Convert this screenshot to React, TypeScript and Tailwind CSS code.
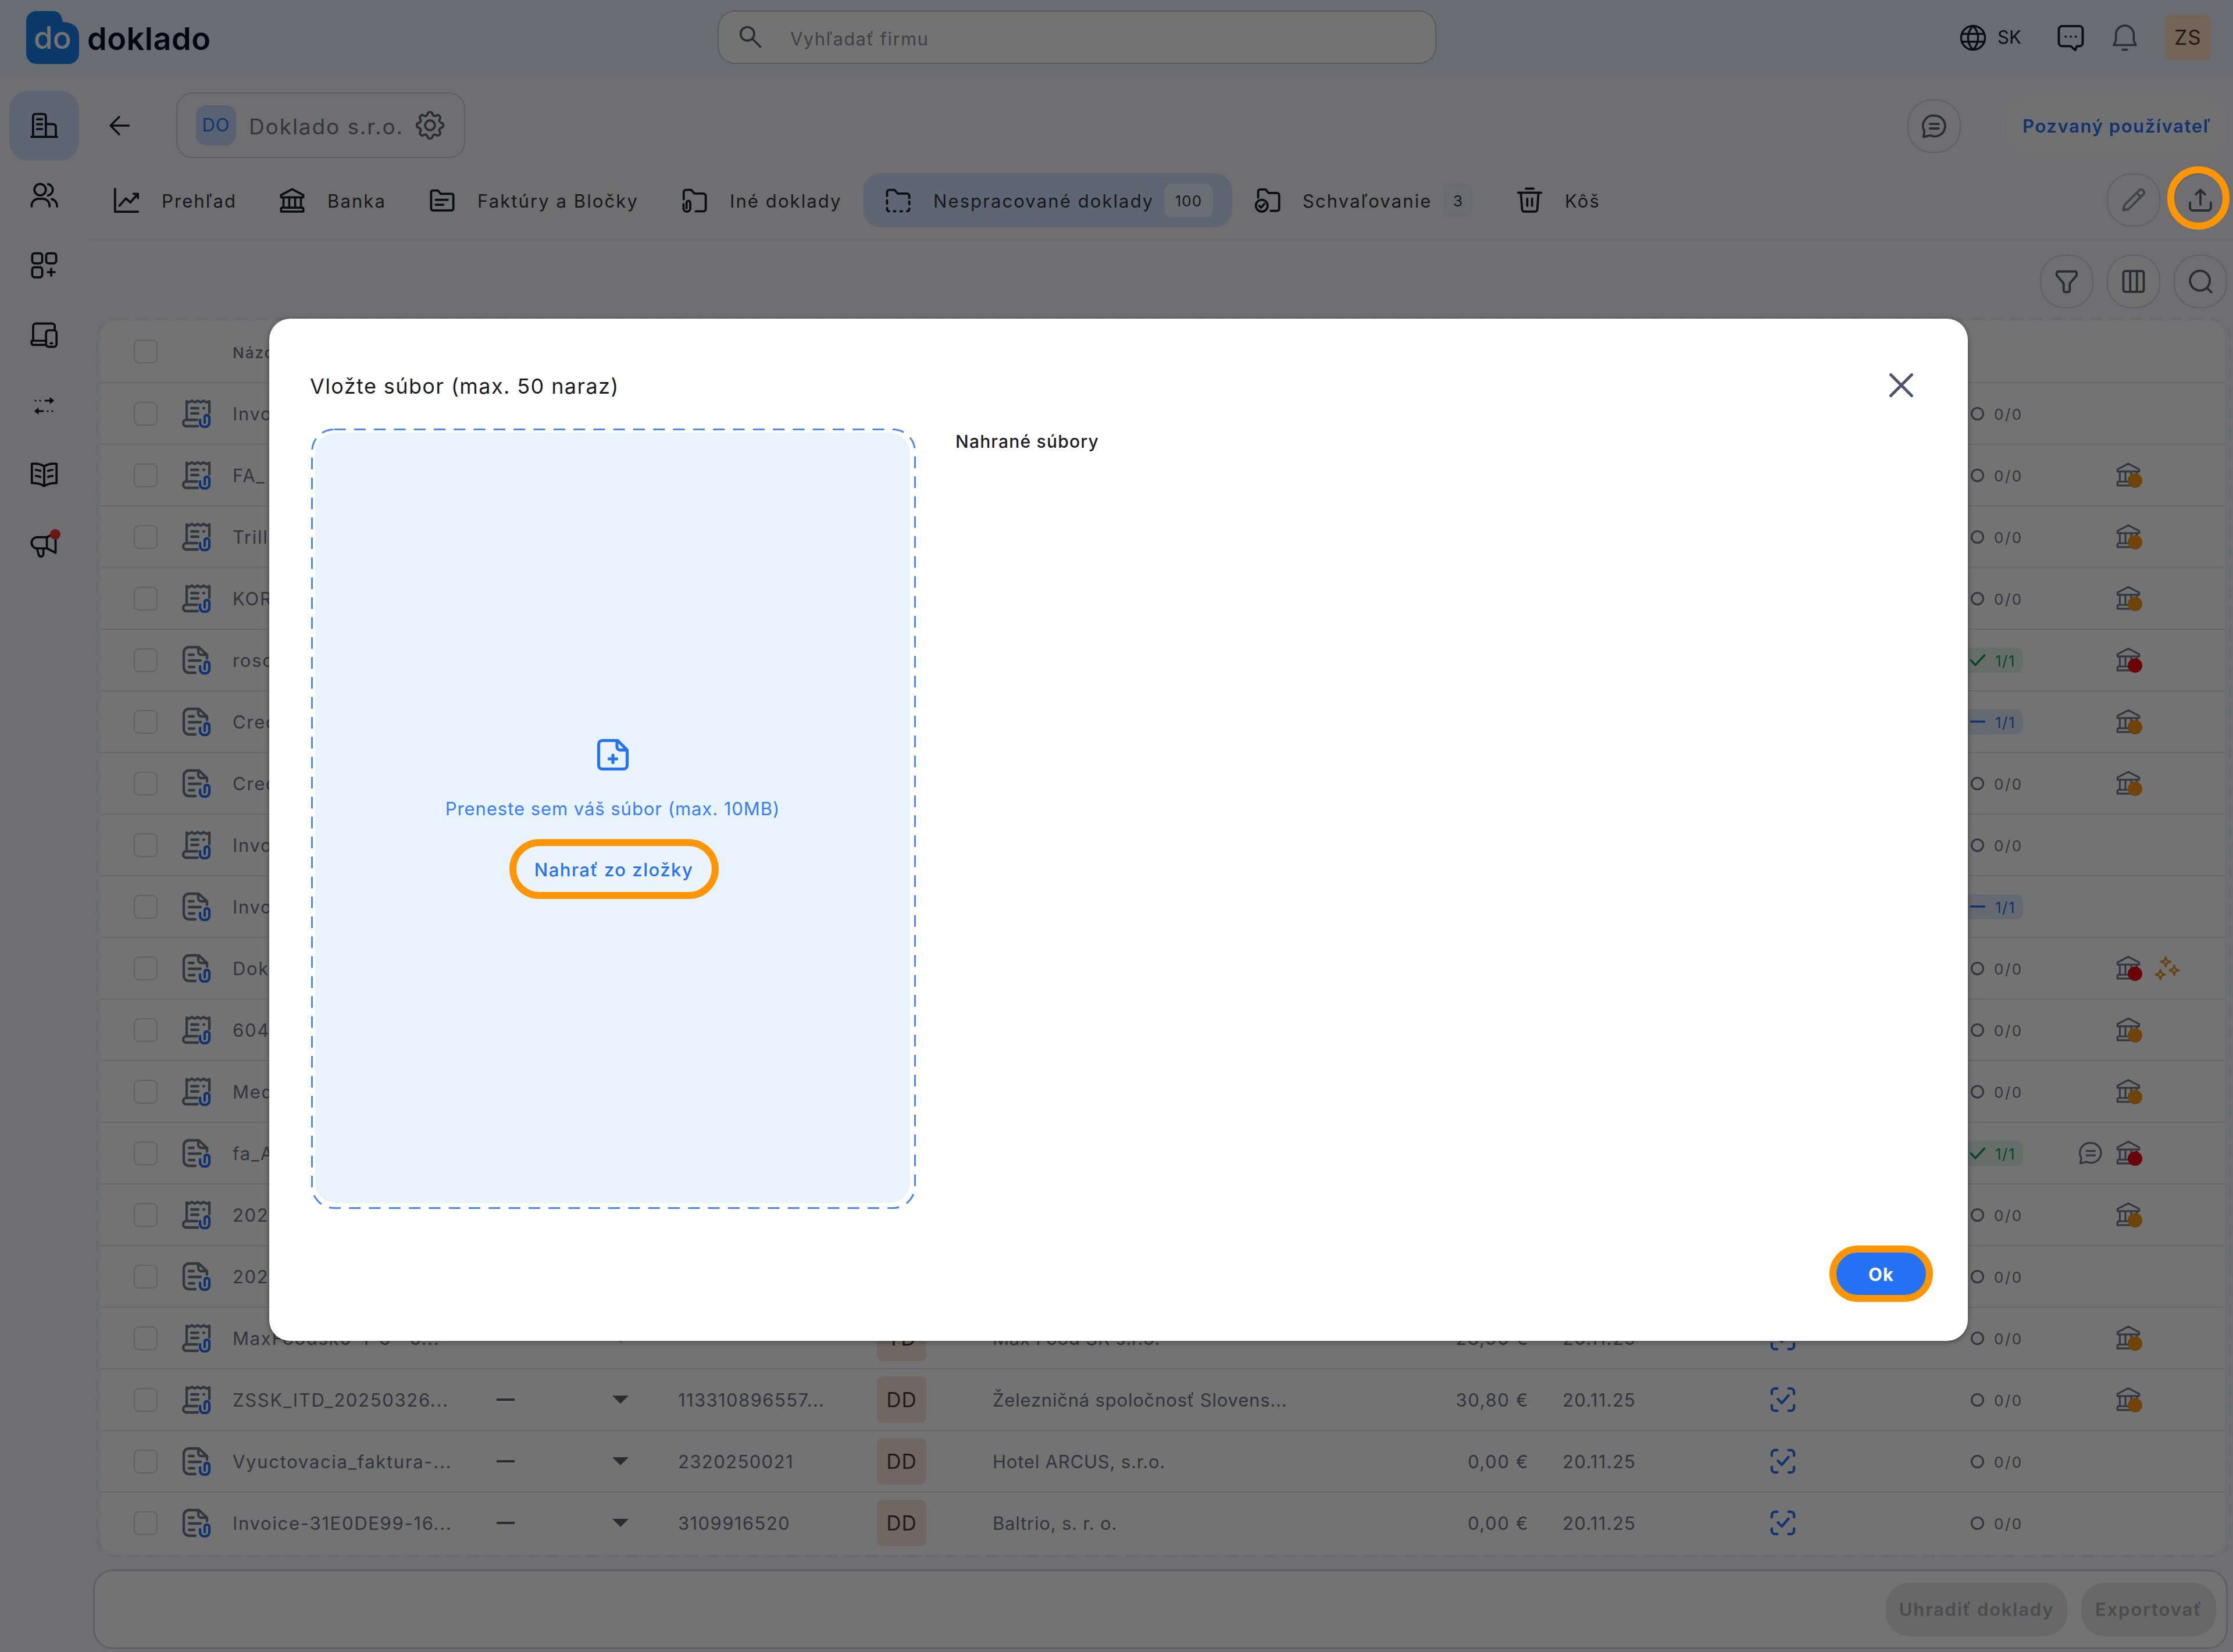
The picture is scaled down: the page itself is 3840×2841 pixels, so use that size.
import React from 'react'
import { BsGear } from 'react-icons/bs'

interface Row {
  kind: 'receipt' | 'file'
  name: string
  number?: string
  owner?: string
  company?: string
  price?: string
  status: 'none' | 'approved' | 'waiting'
  bank?: 'orange' | 'red'
  comment?: boolean
  sparkle?: boolean
}

const rows: Row[] = [
  { kind: 'receipt', name: 'Invoice', status: 'none' },
  { kind: 'receipt', name: 'FA_', status: 'none', bank: 'orange' },
  { kind: 'receipt', name: 'Trillium', status: 'none', bank: 'orange' },
  { kind: 'receipt', name: 'KORE', status: 'none', bank: 'orange' },
  { kind: 'file', name: 'roscam', status: 'approved', bank: 'red' },
  { kind: 'file', name: 'Credit', status: 'waiting', bank: 'orange' },
  { kind: 'file', name: 'Credit', status: 'none', bank: 'orange' },
  { kind: 'receipt', name: 'Invoice', status: 'none' },
  { kind: 'file', name: 'Invoice', status: 'waiting' },
  { kind: 'file', name: 'Dok', status: 'none', bank: 'red', sparkle: true },
  { kind: 'receipt', name: '604', status: 'none', bank: 'orange' },
  { kind: 'receipt', name: 'Media', status: 'none', bank: 'orange' },
  { kind: 'file', name: 'fa_A', status: 'approved', bank: 'red', comment: true },
  { kind: 'receipt', name: '202', status: 'none', bank: 'orange' },
  { kind: 'file', name: '202', status: 'none' },
  { kind: 'receipt', name: 'MaxFoodsk0-1-6--6...', number: ' ', owner: 'TD', company: 'Max Food SK s.r.o.', price: '28,90 €', status: 'none', bank: 'orange' },
  { kind: 'receipt', name: 'ZSSK_ITD_20250326...', number: '113310896557...', owner: 'DD', company: 'Železničná spoločnosť Slovens...', price: '30,80 €', status: 'none', bank: 'orange' },
  { kind: 'file', name: 'Vyuctovacia_faktura-...', number: '2320250021', owner: 'DD', company: 'Hotel ARCUS, s.r.o.', price: '0,00 €', status: 'none' },
  { kind: 'file', name: 'Invoice-31E0DE99-16...', number: '3109916520', owner: 'DD', company: 'Baltrio, s. r. o.', price: '0,00 €', status: 'none' }
]

interface IconProps {
  d: string
  className?: string
  width?: number
}

const Icon: React.FC<IconProps> = ({ d, className = 'size-12', width = 1.7 }) => (
  <svg viewBox="0 0 24 24" className={`shrink-0 ${className}`} fill="none" stroke="currentColor" strokeWidth={width} strokeLinecap="round" strokeLinejoin="round">
    <path d={d} />
  </svg>
)

const paths = {
  building: 'M1 21.7h22M2.4 21.5V4a2 2 0 0 1 2-2h7a2 2 0 0 1 2 2v17.5M13.4 10.7h6.2a2.4 2.4 0 0 1 2.4 2.4v8.4M5.8 6.6h4.4M5.8 10.8h4.4M5.8 15h4.4',
  users: 'M8.5 2.2a4.9 4.9 0 1 0 0 9.8a4.9 4.9 0 1 0 0-9.8M15.2 2.3a4.9 4.9 0 0 1 0 9.7M1.2 21.5v-.8a5.8 5.8 0 0 1 5.8-5.8h3.8a5.8 5.8 0 0 1 5.8 5.8v.8M18.6 15.2a6 6 0 0 1 4.4 5.8v.5',
  apps: 'M3.7 1.8h4.6a2 2 0 0 1 2 2v4.6a2 2 0 0 1-2 2h-4.6a2 2 0 0 1-2-2v-4.6a2 2 0 0 1 2-2zM15.7 1.8h4.6a2 2 0 0 1 2 2v4.6a2 2 0 0 1-2 2h-4.6a2 2 0 0 1-2-2v-4.6a2 2 0 0 1 2-2zM3.7 13.8h4.6a2 2 0 0 1 2 2v4.6a2 2 0 0 1-2 2h-4.6a2 2 0 0 1-2-2v-4.6a2 2 0 0 1 2-2zM18 15v6M15 18h6',
  devices: 'M2.5 17V4.500a2.300 2.300 0 0 1 2.300-2.300h14a2.300 2.300 0 0 1 2.300 2.300v2.500M12.500 17H1.200v2.300a1.300 1.300 0 0 0 1.300 1.300h10.500M15.800 8h4.600a2.200 2.200 0 0 1 2.200 2.200v9.800a2.200 2.200 0 0 1-2.200 2.200h-4.600a2.200 2.200 0 0 1-2.200-2.200v-9.800a2.200 2.200 0 0 1 2.200-2.200zM17.600 19.200h1.200',
  book: 'M12 4.500C9.500 2.800 5.500 2 1.400 2.300v16.500c4 0 7.800.7 10.600 2.700c2.800-2 6.600-2.700 10.600-2.700V2.300C18.500 2 14.500 2.800 12 4.500v17M4.800 7.500c1.400.1 2.700.4 3.900.9M4.800 12.700c1.400.1 2.700.4 3.900.9M19.200 7.500c-1.400.1-2.700.4-3.900.9M19.200 12.700c-1.400.1-2.700.4-3.900.9',
  megaphone: 'M21.800 2.500v16.800l-7.500-3.800H6a4.800 4.800 0 0 1 0-9.600h8.300zM14.300 6v9.500M5.800 15.600l1.500 5.600a2 2 0 0 0 2 1.400a2 2 0 0 0 2-2v-5',
  back: 'M22 12H3M12 21L3 12l9-9',
  chart: 'M1.500 1.500v21h21M5.500 17l6-6.800 4 3.800 6.500-7.500M18.500 6h4v4',
  bank: 'M1.800 9.200V7.200L12 1.800l10.200 5.400v2zM4 9.500v9M9.300 9.500v9M14.700 9.500v9M20 9.500v9M2.800 18.700h18.400a1 1 0 0 1 1 1v2.600H1.800v-2.600a1 1 0 0 1 1-1z',
  folder: 'M1.800 4.500a1.500 1.500 0 0 1 1.500-1.500h4.700l2.600 3h10a1.600 1.600 0 0 1 1.600 1.600v12a1.600 1.600 0 0 1-1.600 1.600H3.400a1.600 1.600 0 0 1-1.600-1.600zM6 11.500h11M6 16h7',
  folderClip: 'M2 11V4.500a2 2 0 0 1 2-2h5l2.800 3.300h8.200a2.200 2.200 0 0 1 2.200 2.200v12a2 2 0 0 1-2 2H13M1.800 15.500v4a2.800 2.800 0 0 0 2.800 2.800h.6a2.800 2.800 0 0 0 2.800-2.800v-5.300a1.700 1.700 0 0 0-3.400 0v5',
  folderDashed: 'M1.800 8V4.500a2 2 0 0 1 2-2h5l2.800 3.300h8.600a2 2 0 0 1 2 2v2M1.800 12v3M22.200 13v2.500M1.800 19v1a2 2 0 0 0 2 2M22.200 19.500v.5a2 2 0 0 1-2 2M8 22h1.500M14 22h1.500',
  folderCheck: 'M3.500 9.500V3.800a1.800 1.800 0 0 1 1.800-1.800h5l2.800 3.300h7.700a2 2 0 0 1 2 2v12.500a1.800 1.800 0 0 1-1.800 1.800H15M6.800 11.500a5.400 5.400 0 1 0 0 10.800a5.400 5.400 0 1 0 0-10.800M4.500 17l1.700 1.700 3-3.400',
  trash: 'M1.500 5h21M8.500 1.300h7M4 5.500l1 14.800a2.200 2.200 0 0 0 2.200 2h9.600a2.200 2.200 0 0 0 2.200-2l1-14.800M9.800 10.500v6.500M14.200 10.500v6.500',
  comment: 'M12.600 1.600a10.200 10.200 0 1 1-4.400 19.400L1.600 22.600l.9-5.600A10.200 10.200 0 0 1 12.600 1.600zM8 9.800h8.500M8 14.300h8.500',
  edit: 'M17.800 2.200a2.200 2.200 0 0 1 3.100 0l.9.900a2.200 2.200 0 0 1 0 3.100L7 21l-5 1 1-5zM15 5l4 4',
  upload: 'M12 16.500V2M7.500 6.500L12 2l4.500 4.500M1.800 14.500v5a2.800 2.800 0 0 0 2.800 2.800h14.800a2.800 2.800 0 0 0 2.800-2.800v-5',
  filter: 'M3.800 2.200h16.400a1.600 1.600 0 0 1 1.600 1.600v2.200L15 14v7a1.400 1.400 0 0 1-1.400 1.400h-3.200A1.400 1.400 0 0 1 9 21V14L2.200 6V3.800a1.600 1.600 0 0 1 1.600-1.600z',
  columns: 'M4 1.800h16a2 2 0 0 1 2 2v16.400a2 2 0 0 1-2 2H4a2 2 0 0 1-2-2V3.800a2 2 0 0 1 2-2zM8.700 2v20M15.300 2v20',
  search: 'M11.500 1.500a9.700 9.700 0 1 0 0 19.400a9.700 9.700 0 1 0 0-19.400M18.500 18.500l4.200 4.200',
  find: 'M8.800 1.500a7.200 7.200 0 1 0 0 14.400a7.200 7.200 0 1 0 0-14.400M14 14l8.500 8.500',
  globe: 'M12 1.300a10.700 10.700 0 1 0 0 21.400a10.700 10.700 0 1 0 0-21.400M12 1.300c-6 6-6 15.400 0 21.400c6-6 6-15.400 0-21.400M2.200 8.500h19.600M2.200 15.500h19.600',
  chat: 'M4.300 1.500h15.400a3 3 0 0 1 3 3v12a3 3 0 0 1-3 3h-2.200l-1.500 3.500-4-3.500H4.300a3 3 0 0 1-3-3v-12a3 3 0 0 1 3-3zM7.500 11h.01M12 11h.01M16.500 11h.01',
  bell: 'M2 18.500l2-4V9a8 8 0 0 1 16 0v5.500l2 4zM10 22.700h4',
  addFile: 'M15.500 1.500H4.200a2.700 2.700 0 0 0-2.700 2.700v15.600a2.700 2.700 0 0 0 2.700 2.700h15.600a2.700 2.700 0 0 0 2.700-2.700V8.500zM15 1.700V6.200a2.300 2.300 0 0 0 2.300 2.300h5M12 12.200v5.600M9.200 15h5.600',
  scan: 'M2 7V5a3 3 0 0 1 3-3h2M17 2h2a3 3 0 0 1 3 3v2M22 17v2a3 3 0 0 1-3 3h-2M7 22H5a3 3 0 0 1-3-3v-2M7.500 11.500l3.500 3.700 6-7',
  sparkles: 'M10.500 1.500l1.200 3.300 3.300 1.200-3.300 1.200-1.200 3.300-1.200-3.300L6 6l3.300-1.200zM18.500 9.500l1.200 3.300 3.300 1.200-3.300 1.200-1.200 3.300-1.200-3.300-3.300-1.200 3.300-1.200zM5.500 13.500l1.200 3.300 3.300 1.200-3.300 1.200-1.200 3.300-1.200-3.300L1 18l3.300-1.200z'
}

const DocIcon: React.FC<{ kind: Row['kind'] }> = ({ kind }) => (
  <svg viewBox="0 0 50 50" className="size-[50px] shrink-0 text-[#70788c]" fill="none" stroke="currentColor" strokeWidth="4.300" strokeLinecap="round" strokeLinejoin="round">
    {kind === 'file' ? (
      <path d="M23 47H12a9 9 0 0 1-9-9V12a9 9 0 0 1 9-9h17l14 13v6M28 4v7a5 5 0 0 0 5 5h10M12 16h8M12 26h20M12 37h9" />
    ) : (
      <path d="M8 34V4l4 2 5-3 5 3 5-3 5 3 5-3 5 3 5-2v20M27 47H7a5.500 5.500 0 0 1-5-5.500a5.500 5.500 0 0 1 5-5.500h19M16 16h12M37 16h1M16 25h12" />
    )}
    <path className="text-[#2672f5]" stroke="currentColor" d="M31 36v5a7 7 0 0 0 7 7h2a7 7 0 0 0 7-7v-9a4 4 0 0 0-4-4h-1a3 3 0 0 0-3 3v10" />
  </svg>
)

const DashedOutline: React.FC<{ className: string; radius: number }> = ({ className, radius }) => (
  <svg className={`pointer-events-none absolute inset-0 size-full overflow-visible ${className}`} fill="none" stroke="currentColor" strokeWidth="3">
    <rect x="1.500" y="1.500" width="100%" height="100%" rx={radius} strokeDasharray="20 14.300" />
  </svg>
)

const Logo = () => (
  <div className="flex items-center">
    <div className="relative h-[91px] w-[91px]">
      <svg viewBox="0 0 91 91" className="size-full">
        <path className="fill-[#1a7ee8]" d="M17 0h28c12 0 16 7 18 19c14 0 28 6 28 24v30a18 18 0 0 1-18 18H17A18 18 0 0 1 0 73V17A17 17 0 0 1 17 0z" />
      </svg>
      <span className="absolute inset-x-0 top-[14px] text-center text-[53px] leading-[64px] font-medium text-white">do</span>
    </div>
    <span className="ml-[14px] pt-1 text-[54px] leading-none font-semibold tracking-[0.5px] text-[#0b0f2b]">doklado</span>
  </div>
)

const Header = () => (
  <header className="flex h-[129px] shrink-0 bg-[#e8f0ff] text-[#1b1d24]">
    <div className="flex w-[1234px] items-center pl-[45px]">
      <Logo />
    </div>
    <div className="mt-[18px] flex h-[92px] w-[1236px] items-center rounded-[30px] border-2 border-[#c4c8d2] bg-white pl-[35px]">
      <Icon d={paths.find} className="mb-[2px] size-[39px] text-[#5c6272]" width={2.200} />
      <span className="ml-[49px] pt-[6px] text-[31px] tracking-[1.4px] text-[#8b909d]">Vyhľadať firmu</span>
    </div>
    <div className="flex flex-1 items-center justify-end pr-[38px]">
      <Icon d={paths.globe} className="size-[46px]" width={1.8} />
      <span className="ml-[19px] w-[42px] text-[31px]">SK</span>
      <Icon d={paths.chat} className="ml-[61px] size-[46px]" width={2} />
      <Icon d={paths.bell} className="ml-[47px] size-[46px] text-[#5c6272]" width={1.8} />
      <div className="ml-[46px] flex size-[79px] items-center justify-center rounded-xl bg-[#ffdcc4] text-[35px] tracking-[1px] text-[#4b3a30]">ZS</div>
    </div>
  </header>
)

const Sidebar = () => (
  <aside className="flex w-[155px] shrink-0 flex-col pt-[27px] pl-4 text-[#15171c]">
    <div className="flex size-[120px] items-center justify-center rounded-[32px] bg-[#d3e3ff]">
      <Icon d={paths.building} width={1.850} />
    </div>
    {[paths.users, paths.apps, paths.devices].map(d => (
      <div key={d} className="flex size-[120px] items-center justify-center">
        <Icon d={d} width={1.850} />
      </div>
    ))}
    <div className="flex size-[120px] items-center justify-center pt-1">
      <svg viewBox="0 0 38 34" className="h-[34px] w-[38px]" fill="none" stroke="currentColor" strokeWidth="3.200" strokeLinecap="round">
        <path d="M4 8h.01M12 8h.01M21 8h9M33 26h.01M25 26h.01M17 26H8" />
        <path d="M29 2.500l7 5.500-7 5.500zM9 20.500L2 26l7 5.500z" fill="currentColor" strokeWidth="0.500" />
      </svg>
    </div>
    <div className="flex size-[120px] items-center justify-center pt-[2px]">
      <Icon d={paths.book} width={1.850} />
    </div>
    <div className="relative flex size-[120px] items-center justify-center">
      <Icon d={paths.megaphone} width={1.850} />
      <span className="absolute top-[34px] left-[70px] size-[18px] rounded-full bg-[#e8352b]" />
    </div>
  </aside>
)

const RoundButton: React.FC<IconProps> = ({ d, className = '', width }) => (
  <div className={`flex size-[92px] shrink-0 items-center justify-center rounded-[42px] border-2 border-[#d3d6dd] ${className}`}>
    <Icon d={d} className="size-[42px]" width={width ?? 2.200} />
  </div>
)

const Toolbar = () => (
  <div className="flex items-start pt-[30px] pr-[10px]">
    <div className="flex h-[113px] w-[148px] items-center pl-[30px] text-[#1b1d24]">
      <Icon d={paths.back} className="size-10" width={2} />
    </div>
    <div className="flex h-[113px] w-[497px] items-center rounded-[28px] border-2 border-[#cdd0d7] pl-8">
      <div className="flex size-[69px] items-center justify-center rounded-[18px] bg-[#c5daff] text-[31px] tracking-[1px] text-[#2672f5]">DO</div>
      <span className="ml-[22px] w-[287px] pt-1 text-[37px] tracking-[1.9px] whitespace-nowrap text-[#70778a]">Doklado s.r.o.</span>
      <BsGear className="size-[49px] text-[#5c6272]" stroke="currentColor" strokeWidth={0.3} />
    </div>
    <div className="mt-[10px] ml-auto flex items-center text-[#5c6272]">
      <RoundButton d={paths.comment} />
      <div className="ml-[78px] flex h-[96px] w-[380px] items-center justify-center rounded-[36px] bg-[#fbfbfb] text-[31px] font-semibold tracking-[1.6px] whitespace-nowrap text-[#2672f5]">Pozvaný používateľ</div>
    </div>
  </div>
)

const tabs = [
  { label: 'Prehľad', d: paths.chart, w: 'w-[126px]' },
  { label: 'Banka', d: paths.bank, w: 'w-[99px]' },
  { label: 'Faktúry a Bločky', d: paths.folder, w: 'w-[275px]' },
  { label: 'Iné doklady', d: paths.folderClip, w: 'w-[191px]' },
  { label: 'Nespracované doklady', d: paths.folderDashed, w: 'w-[379px]', count: 100, active: true },
  { label: 'Schvaľovanie', d: paths.folderCheck, w: 'w-[219px]', count: 3 },
  { label: 'Kôš', d: paths.trash, w: 'w-[60px]' }
]

const Tabs = () => (
  <div className="flex h-[141px] items-start border-b-2 border-[#eff1f4] pt-[26px] pr-[10px] pl-[2px] text-[#1b1d24]">
    {tabs.map(tab => (
      <div key={tab.label} className={`flex h-[93px] items-center pl-[38px] ${tab.active ? 'rounded-[30px] bg-[#d3e3ff] pr-[34px]' : 'pr-[38px]'}`}>
        <Icon d={tab.d} className="size-[45px]" width={2} />
        <span className={`ml-[38px] pt-[3px] text-[31px] tracking-[2.1px] whitespace-nowrap text-[#34363d] ${tab.w}`}>{tab.label}</span>
        {tab.count && (
          <span className={`flex h-[57px] items-center justify-center rounded-xl pt-[2px] text-[26px] text-[#34363d] ${tab.active ? 'ml-[19px] w-[82px] bg-[#eef3fd] tracking-[1px]' : 'ml-[23px] w-[50px] bg-[#e9effb]'}`}>{tab.count}</span>
        )}
      </div>
    ))}
    <div className="ml-auto flex gap-[23px]">
      <RoundButton d={paths.edit} className="text-[#8d93a1]" />
      <RoundButton d={paths.upload} className="text-[#5c6272]" />
    </div>
  </div>
)

const Status: React.FC<{ status: Row['status'] }> = ({ status }) => {
  if (status === 'approved') {
    return (
      <div className="flex h-[43px] w-[104px] items-center rounded-xl bg-[#e2f3ec] pl-3 text-[26px] tracking-[1.5px] text-[#129a5f]">
        <Icon d="M2 12.500l6.500 7L22 5" className="size-[28px]" width={3} />
        <span className="ml-4 pt-[2px]">1/1</span>
      </div>
    )
  }
  if (status === 'waiting') {
    return (
      <div className="flex h-[43px] w-[104px] items-center rounded-xl bg-[#e0e9fb] pl-3 text-[26px] tracking-[1.5px] text-[#2f6fe0]">
        <Icon d="M2 12h20" className="size-[28px]" width={2.800} />
        <span className="ml-4 pt-[2px]">1/1</span>
      </div>
    )
  }
  return (
    <div className="flex h-[43px] w-[104px] items-center pl-[14px] text-[26px] tracking-[2.5px] text-[#70778a]">
      <span className="size-[23px] rounded-full border-3 border-[#70778a]" />
      <span className="ml-[17px] pt-[3px]">0/0</span>
    </div>
  )
}

const BankState: React.FC<{ color: string }> = ({ color }) => (
  <div className="relative -mt-[2px] size-11 text-[#70788c]">
    <Icon d={paths.bank} className="size-11" width={1.700} />
    <span className={`absolute top-5 left-[21px] size-[25px] rounded-full ${color === 'red' ? 'bg-[#ef0d18]' : 'bg-[#f59414]'}`} />
  </div>
)

const Checkbox = () => <span className="ml-[57px] size-[41px] shrink-0 rounded-[9px] border-2 border-[#d5d8de]" />

const TableRow: React.FC<{ row: Row }> = ({ row }) => (
  <div className="flex h-[106px] items-center border-t-2 border-[#e2e5ea] text-[31px] text-[#70778a]">
    <Checkbox />
    <div className="ml-[42px]">
      <DocIcon kind={row.kind} />
    </div>
    <span className="ml-[37px] w-[454px] pt-[2px] tracking-[1.7px] whitespace-nowrap">{row.name}</span>
    <div className="flex w-[312px] items-center">
      {row.number && (
        <>
          <span className="h-1 w-[31px] bg-[#5c6272]" />
          <svg viewBox="0 0 28 14" className="ml-[168px] h-[14px] w-[28px]">
            <path d="M0 0h28L14 14z" className="fill-[#5c6272]" />
          </svg>
        </>
      )}
    </div>
    <span className="w-[342px] pt-[2px] tracking-[1.4px] whitespace-nowrap">{row.number}</span>
    <div className="w-[199px]">
      {row.owner && <div className="flex h-20 w-[85px] items-center justify-center rounded-[10px] bg-[#f8e3da] text-[35px] tracking-[1px] text-[#4b3a30]">{row.owner}</div>}
    </div>
    <span className="w-[640px] pt-[2px] tracking-[0.8px] whitespace-nowrap">{row.company}</span>
    <span className="w-[282px] pt-[2px] text-right tracking-[1.6px] whitespace-nowrap">{row.price}</span>
    <span className="ml-[58px] w-[356px] pt-[2px] tracking-[1.3px]">{row.price && '20.11.25'}</span>
    <div className="w-[332px]">
      {row.price && <Icon d={paths.scan} className="size-[46px] text-[#2672f5]" width={2.200} />}
    </div>
    <Status status={row.status} />
    <div className="flex w-[159px] justify-end pr-[23px] text-[#70788c]">
      {row.comment && <Icon d={paths.comment} className="size-10" width={2} />}
    </div>
    <div className="w-[67px]">{row.bank && <BankState color={row.bank} />}</div>
    {row.sparkle && <Icon d={paths.sparkles} className="size-11 text-[#e39a2c]" width={1.600} />}
  </div>
)

const DocumentTable = () => (
  <div className="relative mt-[17px] ml-[11px] h-[2128px] w-[3667px] px-[7px] pt-[5px]">
    <DashedOutline className="text-[#e3e8f1]" radius={32} />
    <div className="h-[2121px] overflow-hidden rounded-[28px] bg-white">
      <div className="flex h-[105px] items-center text-[26px] font-medium text-[#70778a]">
        <Checkbox />
        <span className="ml-[129px] pt-1 tracking-[2px]">Názov</span>
      </div>
      {rows.map((row, i) => (
        <TableRow key={i} row={row} />
      ))}
    </div>
  </div>
)

const BottomBar = () => (
  <div className="mt-[24px] ml-[5px] flex h-[137px] w-[3671px] items-center justify-end gap-6 rounded-[34px] border-3 border-[#d3d6dc] bg-white pr-[17px] text-[31px] font-semibold whitespace-nowrap text-[#a6a8b0]">
    <div className="flex h-[92px] w-[312px] items-center justify-center rounded-[40px] bg-[#e6e6e6] pt-[2px] tracking-[1.8px]">Uhradiť doklady</div>
    <div className="flex h-[92px] w-[232px] items-center justify-center rounded-[40px] bg-[#e6e6e6] pt-[2px] tracking-[1.9px]">Exportovať</div>
  </div>
)

const UploadDialog = () => (
  <div className="absolute inset-0 bg-black/55 pt-[548px] pl-[463px]">
    <div className="flex h-[1758px] w-[2921px] flex-col rounded-[36px] bg-white pr-[60px] pl-[72px] shadow-[0_2px_10px_rgba(0,0,0,0.4)]">
      <div className="flex h-[189px] shrink-0 items-center justify-between pt-[42px] pr-[34px]">
        <h2 className="-ml-[2px] text-[36px] tracking-[1.4px] text-[#1d1e22]">Vložte súbor (max. 50 naraz)</h2>
        <Icon d="M1.500 1.500l21 21M22.500 1.500l-21 21" className="mb-[3px] size-[41px] text-[#4d546b]" width={2.900} />
      </div>
      <div className="flex">
        <div className="relative h-[1339px] w-[1037px] p-[7px]">
          <DashedOutline className="text-[#4b87f8]" radius={38} />
          <div className="flex size-full flex-col items-center rounded-[36px] bg-[#e9f3fe] pt-[526px] text-[31px] text-[#2672f5]">
            <Icon d={paths.addFile} className="size-[56px]" width={2.200} />
            <p className="mt-[47px] leading-[36px] tracking-[0.95px] whitespace-nowrap text-[#3a7df8]">Preneste sem váš súbor (max. 10MB)</p>
            <button className="mt-[34px] ml-[4px] flex h-[103px] w-[360px] items-center justify-center rounded-full border-12 border-[#ff9500] bg-[#ebf3ff] pt-1 font-medium tracking-[1.5px] whitespace-nowrap">Nahrať zo zložky</button>
          </div>
        </div>
        <h3 className="ml-[71px] text-[30px] font-medium tracking-[1.2px] text-[#1d1e22]">Nahrané súbory</h3>
      </div>
      <button className="mt-[66px] flex h-[97px] w-[178px] items-center justify-center self-end rounded-full border-12 border-[#ff9500] bg-[#2672f5] pt-1 text-[31px] font-bold tracking-[1px] text-white">Ok</button>
    </div>
    {/* highlight around the upload action */}
    <span className="absolute top-[286px] left-[3727px] h-[109px] w-[107px] rounded-full border-12 border-[#ff9500]" />
  </div>
)

const App: React.FC = () => {
  return (
    <div className="relative flex h-[2841px] w-[3840px] flex-col overflow-hidden bg-[#f5f7fa] font-[Inter,sans-serif]">
      <Header />
      <div className="flex flex-1">
        <Sidebar />
        <main className="flex-1">
          <Toolbar />
          <Tabs />
          <div className="mt-[25px] flex justify-end gap-[23px] pr-[10px] text-[#5c6272]">
            <RoundButton d={paths.filter} />
            <RoundButton d={paths.columns} className="bg-[#fbfbfb]" />
            <RoundButton d={paths.search} />
          </div>
          <DocumentTable />
          <BottomBar />
        </main>
      </div>
      <UploadDialog />
    </div>
  )
}

export default App
